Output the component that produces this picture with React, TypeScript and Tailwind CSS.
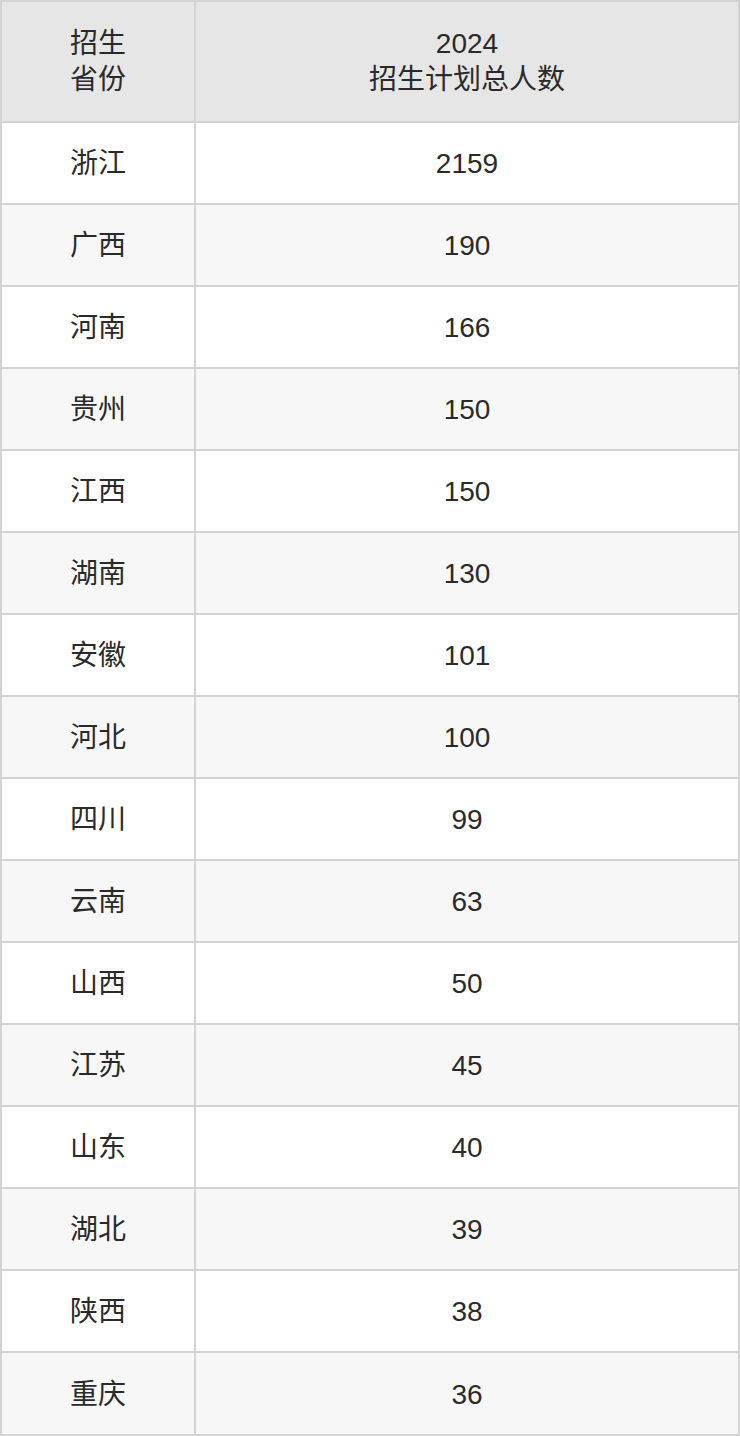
import React from "react";

const rows: [string, string][] = [
  ["浙江", "2159"],
  ["广西", "190"],
  ["河南", "166"],
  ["贵州", "150"],
  ["江西", "150"],
  ["湖南", "130"],
  ["安徽", "101"],
  ["河北", "100"],
  ["四川", "99"],
  ["云南", "63"],
  ["山西", "50"],
  ["江苏", "45"],
  ["山东", "40"],
  ["湖北", "39"],
  ["陕西", "38"],
  ["重庆", "36"],
];

export default function App() {
  return (
    <div
      className="w-[740px] bg-white text-[#2a2a2a] text-[28px] leading-[36px]"
      style={{ fontFamily: '"Liberation Sans", "Noto Sans CJK SC", sans-serif' }}
    >
      <div className="border-2 border-[#d3d3d3]">
        <div className="flex h-[121px] bg-[#e6e6e6] border-b-2 border-[#d3d3d3]">
          <div className="w-[194px] shrink-0 border-r-2 border-[#d3d3d3] flex flex-col items-center justify-center">
            <div>招生</div>
            <div>省份</div>
          </div>
          <div className="flex-1 flex flex-col items-center justify-center">
            <div>2024</div>
            <div>招生计划总人数</div>
          </div>
        </div>
        {rows.map(([p, n], i) => {
          const last = i === rows.length - 1;
          return (
            <div
              key={i}
              className={
                "flex " +
                (last ? "h-[81px] " : "h-[82px] border-b-2 border-[#d3d3d3] ") +
                (i % 2 === 1 ? "bg-[#f7f7f7]" : "bg-white")
              }
            >
              <div className="w-[194px] shrink-0 border-r-2 border-[#d3d3d3] flex items-center justify-center pt-[2px]">
                {p}
              </div>
              <div className="flex-1 flex items-center justify-center pt-[2px]">{n}</div>
            </div>
          );
        })}
      </div>
    </div>
  );
}
